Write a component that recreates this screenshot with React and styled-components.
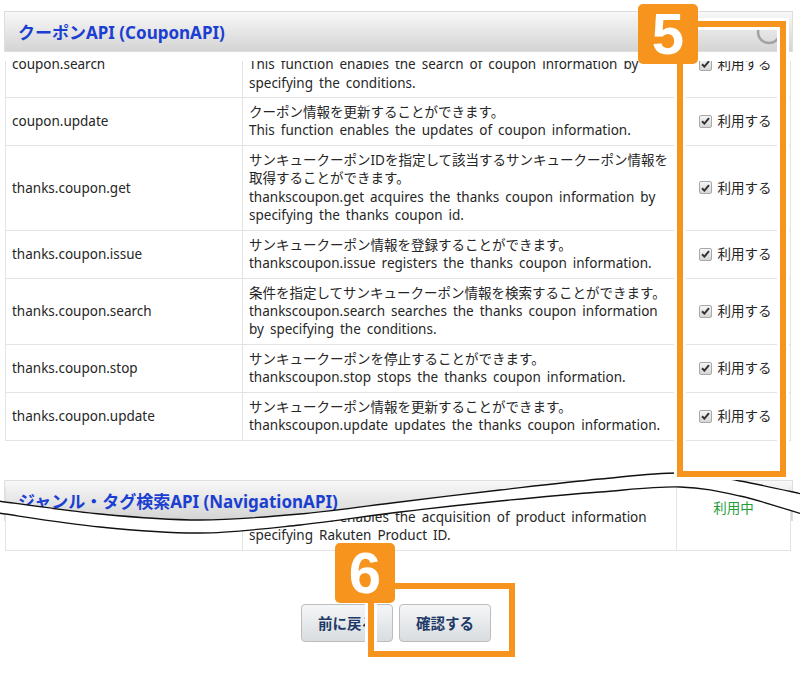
import styled, { createGlobalStyle } from 'styled-components';

const GlobalStyle = createGlobalStyle`
  html, body {
    margin: 0;
    background: #fff;
  }
  body {
    font-family: "Noto Sans", "Noto Sans CJK JP", sans-serif;
    color: #262626;
  }
`;

const ORANGE = '#f7941e';

const Page = styled.div`
  position: relative;
  width: 800px;
  height: 680px;
  overflow: hidden;
  padding-top: 11px;
  box-sizing: border-box;
`;

const PanelHeader = styled.div`
  display: flex;
  align-items: center;
  box-sizing: border-box;
  height: 41px;
  width: 789px;
  margin: ${(p) => p.$top || 0}px 0 0 4px;
  padding: 0 10px 0 13px;
  border: 1px solid #dedede;
  background: linear-gradient(#f8f8f8, #d4d4d4);
  color: #1b3fd1;
  font-size: 17px;
  font-weight: bold;
  white-space: nowrap;
`;

const Collapse = styled.svg`
  margin-left: auto;
  flex-shrink: 0;
`;

const Table = styled.div`
  box-sizing: border-box;
  width: 786px;
  margin: ${(p) => p.$top}px 0 0 5px;
  border-left: 1px solid #e3e3e3;
  border-right: 1px solid #e3e3e3;
  font-size: 13.5px;
  line-height: 18.3px;
  word-spacing: 2.5px;
`;

const Row = styled.div`
  display: grid;
  grid-template-columns: 236px ${(p) => p.$mid}px 1fr;
  border-bottom: 1px solid #e3e3e3;
`;

const Cut = styled.div`
  position: relative;
  z-index: 1;
  height: ${(p) => p.$h}px;
  overflow: hidden;
  display: flex;
  flex-direction: column;
  justify-content: flex-end;
  background: #fff;
  margin-top: ${(p) => p.$pull || 0}px;
  clip-path: ${(p) => (p.$clip ? `path('${p.$clip}')` : 'none')};
`;

const Cell = styled.div`
  display: flex;
  flex-direction: column;
  justify-content: center;
  align-items: ${(p) => (p.$center ? 'center' : 'flex-start')};
  padding: 5.2px 6px;
  min-width: 0;
  & + & {
    border-left: 1px solid #e3e3e3;
  }
`;

const Line = styled.span`
  display: block;
  white-space: nowrap;
`;

const Use = styled.label`
  display: flex;
  align-items: center;
  gap: 6px;
  white-space: nowrap;
  word-spacing: 0;
  margin-right: 2px;
`;

const Box = styled.span`
  display: inline-flex;
  align-items: center;
  justify-content: center;
  width: 13px;
  height: 13px;
  box-sizing: border-box;
  border: 1px solid #a8a8a8;
  border-radius: 2px;
  background: linear-gradient(#f6f6f6, #d6d6d6);
`;

const Status = styled.span`
  color: #1f9e3a;
  white-space: nowrap;
`;

const Buttons = styled.div`
  display: flex;
  justify-content: center;
  gap: 6px;
  width: 780px;
  margin: 53px 0 0 6px;
`;

const Button = styled.button`
  height: 38px;
  padding: 0 16px;
  border: 1px solid #bdbdbd;
  border-radius: 4px;
  background: linear-gradient(#f5f6f7, #d9dde0);
  color: #1d3a66;
  font-family: "Noto Sans CJK JP", sans-serif;
  font-size: 14.5px;
  font-weight: bold;
  white-space: nowrap;
`;

const Frame = styled.div`
  position: absolute;
  z-index: 3;
  left: ${(p) => p.$x}px;
  top: ${(p) => p.$y}px;
  width: ${(p) => p.$w}px;
  height: ${(p) => p.$h}px;
  box-sizing: border-box;
  border: 6px solid ${ORANGE};
  box-shadow: 0 0 0 3px #fff, inset 0 0 0 3px #fff;
`;

const Badge = styled.div`
  position: absolute;
  z-index: 4;
  left: ${(p) => p.$x}px;
  top: ${(p) => p.$y}px;
  width: 60px;
  height: 60px;
  border-radius: 5px;
  background: ${ORANGE};
  color: #fff;
  font-family: "Liberation Sans", Arial, sans-serif;
  font-weight: bold;
  font-size: 58px;
  line-height: 60px;
  text-align: center;
`;

const Wave = styled.svg`
  position: absolute;
  z-index: 2;
  left: 0;
  top: 0;
  pointer-events: none;
`;

const upper = [[-2, 501], [100, 514], [200, 520], [300, 514], [400, 502], [500, 490], [600, 479], [680, 473], [740, 481], [802, 494]];
const lower = [[-2, 513], [100, 527], [200, 533], [300, 525], [400, 512], [500, 501], [600, 492], [680, 487], [740, 496], [802, 514]];

const curve = (pts, start = 'M') => {
  let d = `${start}${pts[0][0]},${pts[0][1]}`;
  for (let i = 0; i < pts.length - 1; i++) {
    const p0 = pts[i - 1] || pts[i];
    const p1 = pts[i];
    const p2 = pts[i + 1];
    const p3 = pts[i + 2] || p2;
    const c1 = [p1[0] + (p2[0] - p0[0]) / 6, p1[1] + (p2[1] - p0[1]) / 6];
    const c2 = [p2[0] - (p3[0] - p1[0]) / 6, p2[1] - (p3[1] - p1[1]) / 6];
    d += ` C${c1[0].toFixed(1)},${c1[1].toFixed(1)} ${c2[0].toFixed(1)},${c2[1].toFixed(1)} ${p2[0]},${p2[1]}`;
  }
  return d;
};

const band = `${curve(upper)} ${curve([...lower].reverse(), 'L')} Z`;

// clip for the lower row: keep only what lies below the lower line
const CUT_X = 5;
const CUT_Y = 487;
const rowClip = `${curve(lower.map(([x, y]) => [x - CUT_X, y - CUT_Y]))} L800,80 L-10,80 Z`;

const Check = () => (
  <Use>
    <Box>
      <svg width="9" height="8" viewBox="0 0 9 8">
        <path d="M1 4.2 L3.4 6.6 L8 1.2" fill="none" stroke="#333" strokeWidth="2" />
      </svg>
    </Box>
    利用する
  </Use>
);

const coupons = [
  {
    name: 'thanks.coupon.get',
    lines: [
      'サンキュークーポンIDを指定して該当するサンキュークーポン情報を',
      '取得することができます。',
      'thankscoupon.get acquires the thanks coupon information by',
      'specifying the thanks coupon id.',
    ],
  },
  {
    name: 'thanks.coupon.issue',
    lines: ['サンキュークーポン情報を登録することができます。', 'thankscoupon.issue registers the thanks coupon information.'],
  },
  {
    name: 'thanks.coupon.search',
    lines: [
      '条件を指定してサンキュークーポン情報を検索することができます。',
      'thankscoupon.search searches the thanks coupon information',
      'by specifying the conditions.',
    ],
  },
  {
    name: 'thanks.coupon.stop',
    lines: ['サンキュークーポンを停止することができます。', 'thankscoupon.stop stops the thanks coupon information.'],
  },
  {
    name: 'thanks.coupon.update',
    lines: ['サンキュークーポン情報を更新することができます。', 'thankscoupon.update updates the thanks coupon information.'],
  },
];

const ApiRow = ({ name, lines, mid = 439, status }) => (
  <Row $mid={mid}>
    <Cell>{name}</Cell>
    <Cell>
      {lines.map((l) => (
        <Line key={l}>{l}</Line>
      ))}
    </Cell>
    <Cell $center>{status || <Check />}</Cell>
  </Row>
);

export default function App() {
  return (
    <>
      <GlobalStyle />
      <Page>
        <PanelHeader>
          クーポンAPI (CouponAPI)
          <Collapse width="26" height="26" viewBox="0 0 26 26">
            <circle cx="13" cy="13" r="11" fill="none" stroke="#a3a3a3" strokeWidth="2.5" />
          </Collapse>
        </PanelHeader>

        <Table $top={9}>
          <Cut $h={37}>
            <ApiRow
              name="coupon.search"
              lines={[
                '条件を指定してクーポン情報を検索することができます。',
                'This function enables the search of coupon information by',
                'specifying the conditions.',
              ]}
            />
          </Cut>
          <ApiRow
            name="coupon.update"
            lines={['クーポン情報を更新することができます。', 'This function enables the updates of coupon information.']}
          />
          {coupons.map((c) => (
            <ApiRow key={c.name} {...c} />
          ))}
        </Table>

        <PanelHeader $top={39}>ジャンル・タグ検索API (NavigationAPI)</PanelHeader>
        <Table $top={0}>
          <Cut $h={64} $pull={-34} $clip={rowClip}>
            <ApiRow
              name="ichiba.item.get"
              mid={434}
              status={<Status>利用中</Status>}
              lines={[
                '楽天商品IDを指定して、楽天市場の商品情報を取得することが',
                'できます。',
                'This function enables the acquisition of product information',
                'specifying Rakuten Product ID.',
              ]}
            />
          </Cut>
        </Table>

        <Buttons>
          <Button>前に戻る</Button>
          <Button>確認する</Button>
        </Buttons>

        <Wave width="800" height="680" viewBox="0 0 800 680">
          <path d={band} fill="#fff" />
          <path d={curve(upper)} fill="none" stroke="#111" strokeWidth="1.3" />
          <path d={curve(lower)} fill="none" stroke="#111" strokeWidth="1.3" />
        </Wave>

        <Frame $x={677} $y={21} $w={109} $h={456} />
        <Badge $x={638} $y={4}>5</Badge>
        <Frame $x={368} $y={583} $w={147} $h={74} />
        <Badge $x={335} $y={543}>6</Badge>
      </Page>
    </>
  );
}
